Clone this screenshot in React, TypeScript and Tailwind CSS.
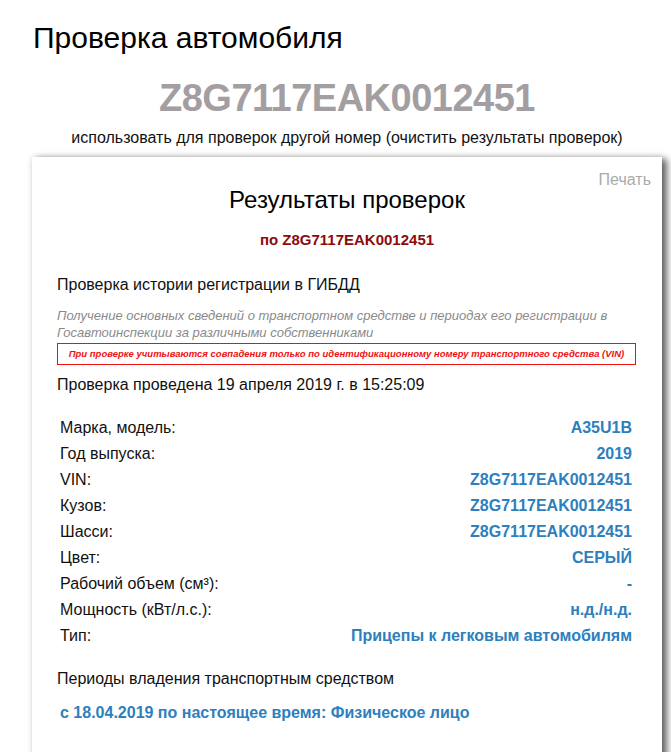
const vin = "Z8G7117EAK0012451";

const rows: [React.ReactNode, string][] = [
  ["Марка, модель:", "A35U1B"],
  ["Год выпуска:", "2019"],
  ["VIN:", vin],
  ["Кузов:", vin],
  ["Шасси:", vin],
  ["Цвет:", "СЕРЫЙ"],
  [<>Рабочий объем (см³):</>, "-"],
  ["Мощность (кВт/л.с.):", "н.д./н.д."],
  ["Тип:", "Прицепы к легковым автомобилям"],
];

export default function App() {
  return (
    <main className="min-h-[752px] overflow-hidden bg-white font-['Liberation_Sans',Arial,sans-serif] text-[#111]">
      <h1 className="pl-[33px] pt-[18px] text-[30px] leading-[40px] text-black">Проверка автомобиля</h1>

      <div className="ml-[32px] w-[630px]">
        <div className="mt-[18px] text-center text-[38px] font-bold leading-[44px] tracking-[-0.5px] text-[#a39ea1]">
          {vin}
        </div>

        <p className="mt-[8px] text-center text-[16px] leading-[20px] text-[#111]">
          использовать для проверок другой номер (очистить результаты проверок)
        </p>
      </div>

      <section className="ml-[32px] mt-[9px] w-[630px] bg-white pb-[40px] shadow-[5px_2px_7px_rgba(0,0,0,0.6),0_0_6px_rgba(0,0,0,0.12)]">
        <div className="flex justify-end pr-[11px] pt-[13px]">
          <span className="text-[16px] leading-[20px] text-[#aaa]">Печать</span>
        </div>

        <h2 className="-mt-[5px] text-center text-[24px] leading-[30px] text-black">Результаты проверок</h2>
        <div className="mt-[15px] text-center text-[15px] font-bold leading-[20px] text-[#8b0b0b]">по {vin}</div>

        <div className="px-[25px]">
          <h3 className="mt-[25px] text-[16px] leading-[20px]">Проверка истории регистрации в ГИБДД</h3>
          <p className="mt-[12px] text-[13px] italic leading-[17px] text-[#8a8a8a]">
            Получение основных сведений о транспортном средстве и периодах его регистрации в Госавтоинспекции за
            различными собственниками
          </p>
          <div className="mt-[2px] mr-[1px] whitespace-nowrap border border-[#f01010] py-[4px] text-center text-[9.5px] font-bold italic leading-[12px] text-[#f01010]">
            При проверке учитываются совпадения только по идентификационному номеру транспортного средства (VIN)
          </div>

          <p className="mt-[10px] text-[16px] leading-[20px]">Проверка проведена 19 апреля 2019 г. в 15:25:09</p>

          <div className="mt-[20px] flex flex-col pl-[3px] pr-[5px]">
            {rows.map(([label, value], i) => (
              <div key={i} className="flex h-[26px] items-center justify-between text-[16px]">
                <span>{label}</span>
                <span className="font-bold text-[#2d7fbd]">{value}</span>
              </div>
            ))}
          </div>

          <h3 className="mt-[20px] text-[16px] leading-[20px]">Периоды владения транспортным средством</h3>
          <p className="mt-[14px] pl-[3px] text-[16px] font-bold leading-[20px] text-[#2d7fbd]">
            с 18.04.2019 по настоящее время: Физическое лицо
          </p>
        </div>
      </section>
    </main>
  );
}
